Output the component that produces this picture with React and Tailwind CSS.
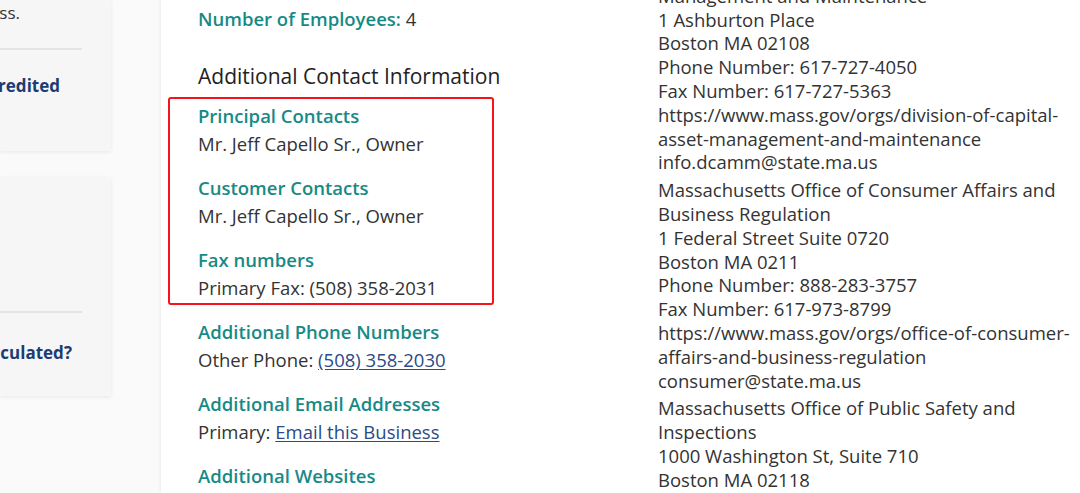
const rightGroups = [
  [
    'Division of Capital Asset',
    'Management and Maintenance',
    '1 Ashburton Place',
    'Boston MA 02108',
    'Phone Number: 617-727-4050',
    'Fax Number: 617-727-5363',
    'https://www.mass.gov/orgs/division-of-capital-',
    'asset-management-and-maintenance',
    'info.dcamm@state.ma.us',
  ],
  [
    'Massachusetts Office of Consumer Affairs and',
    'Business Regulation',
    '1 Federal Street Suite 0720',
    'Boston MA 0211',
    'Phone Number: 888-283-3757',
    'Fax Number: 617-973-8799',
    'https://www.mass.gov/orgs/office-of-consumer-',
    'affairs-and-business-regulation',
    'consumer@state.ma.us',
  ],
  [
    'Massachusetts Office of Public Safety and',
    'Inspections',
    '1000 Washington St, Suite 710',
    'Boston MA 02118',
  ],
]

function Section({ label, children }) {
  return (
    <div className="mb-5">
      <div className="font-semibold text-[#178a86] leading-6">{label}</div>
      <div className="mt-1 text-[#333] leading-6">{children}</div>
    </div>
  )
}

export default function App() {
  return (
    <div
      className="flex h-[493px] w-[1080px] overflow-hidden bg-[#fafafa] text-[18.5px] text-[#333]"
      style={{ fontFamily: '"Open Sans", Lato, sans-serif' }}
    >
      {/* left sidebar cards, cut off at the window edge */}
      <aside className="w-[161px] shrink-0 text-[17px]">
        <div className="h-[151px] w-[111px] bg-[#f6f6f6] shadow-[0_1px_4px_rgba(0,0,0,0.08)]">
          <div className="flex justify-end pr-[91px] pt-[1px] leading-6 whitespace-nowrap">ss.</div>
          <div className="mt-[23px] mr-[29px] h-[2px] bg-[#e4e4e4]" />
          <div className="flex justify-end pr-[51px] pt-[24px] font-bold text-[#1d3c72] leading-6 whitespace-nowrap">
            redited
          </div>
        </div>
        <div className="mt-[26px] h-[219px] w-[111px] bg-[#f6f6f6] shadow-[0_1px_4px_rgba(0,0,0,0.08)] flex flex-col">
          <div className="mt-auto mr-[29px] h-[2px] bg-[#e4e4e4]" />
          <div className="flex justify-end pr-[39px] pt-[28px] pb-[31px] font-bold text-[#1d3c72] leading-6 whitespace-nowrap">
            culated?
          </div>
        </div>
      </aside>

      <main className="flex flex-1 bg-white shadow-[-1px_0_3px_rgba(0,0,0,0.06)]">
        <section className="w-[460px] shrink-0 pl-[37px] pt-[7px]">
          <div className="leading-6">
            <span className="font-semibold text-[#178a86]">Number of Employees:</span> 4
          </div>
          <h2 className="mt-[31px] text-[21px] font-medium leading-7 text-[#222]">Additional Contact Information</h2>

          <div className="relative mt-[14px]">
            <Section label="Principal Contacts">Mr. Jeff Capello Sr., Owner</Section>
            <Section label="Customer Contacts">Mr. Jeff Capello Sr., Owner</Section>
            <Section label="Fax numbers">Primary Fax: (508) 358-2031</Section>
            <div className="pointer-events-none absolute left-[-30px] top-[-7px] h-[208px] w-[326px] rounded-[3px] border-2 border-[#f5141b]" />
          </div>

          <Section label="Additional Phone Numbers">
            Other Phone:{' '}
            <a href="#" className="text-[#2b4a86] underline underline-offset-2">(508) 358-2030</a>
          </Section>
          <Section label="Additional Email Addresses">
            Primary:{' '}
            <a href="#" className="text-[#2b4a86] underline underline-offset-2">Email this Business</a>
          </Section>
          <Section label="Additional Websites">www.capellobuilders.com</Section>
        </section>

        <section className="ml-[37px] mt-[-40px] leading-[23.8px] whitespace-nowrap">
          {rightGroups.map((lines, i) => (
            <div key={i} className="mb-[4px]">
              {lines.map((line) => (
                <div key={line}>{line}</div>
              ))}
            </div>
          ))}
        </section>
      </main>
    </div>
  )
}
